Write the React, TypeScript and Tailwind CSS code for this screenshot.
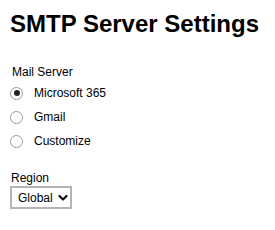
const servers = ["Microsoft 365", "Gmail", "Customize"];

function Radio({ checked }: { checked: boolean }) {
  return (
    <div className="flex h-[13px] w-[13px] items-center justify-center rounded-full border border-[#9a9a9a] bg-white">
      {checked && <div className="h-[6px] w-[6px] rounded-full bg-[#222]" />}
    </div>
  );
}

export default function App() {
  const selected = "Microsoft 365";
  return (
    <div className="h-[230px] w-[275px] bg-white px-[10px] pt-[10px] text-black [font-family:'Liberation_Sans',Arial,sans-serif]">
      <h1 className="text-[24px] font-bold leading-[28px]">SMTP Server Settings</h1>

      <div className="mt-[26px] pl-[2px] text-[12px] leading-[16px]">Mail Server</div>
      <div className="mt-[1px] flex flex-col">
        {servers.map((s) => (
          <div key={s} className="flex h-[24px] items-center">
            <Radio checked={s === selected} />
            <span className="ml-[11px] text-[12px] leading-[16px]">{s}</span>
          </div>
        ))}
      </div>

      <div className="mt-[17px] pl-[1px] text-[12px] leading-[16px]">Region</div>
      <div className="mt-[0px] flex h-[23px] w-[62px] items-center border-2 border-[#b4b4b4] pl-[6px]">
        <span className="text-[12px] leading-[16px]">Global</span>
        <svg className="ml-[5px]" width="10" height="8" viewBox="0 0 10 8">
          <path d="M1.5 2 L5 5.5 L8.5 2" fill="none" stroke="#111" strokeWidth="2.2" strokeLinecap="round" strokeLinejoin="round" />
        </svg>
      </div>
    </div>
  );
}
